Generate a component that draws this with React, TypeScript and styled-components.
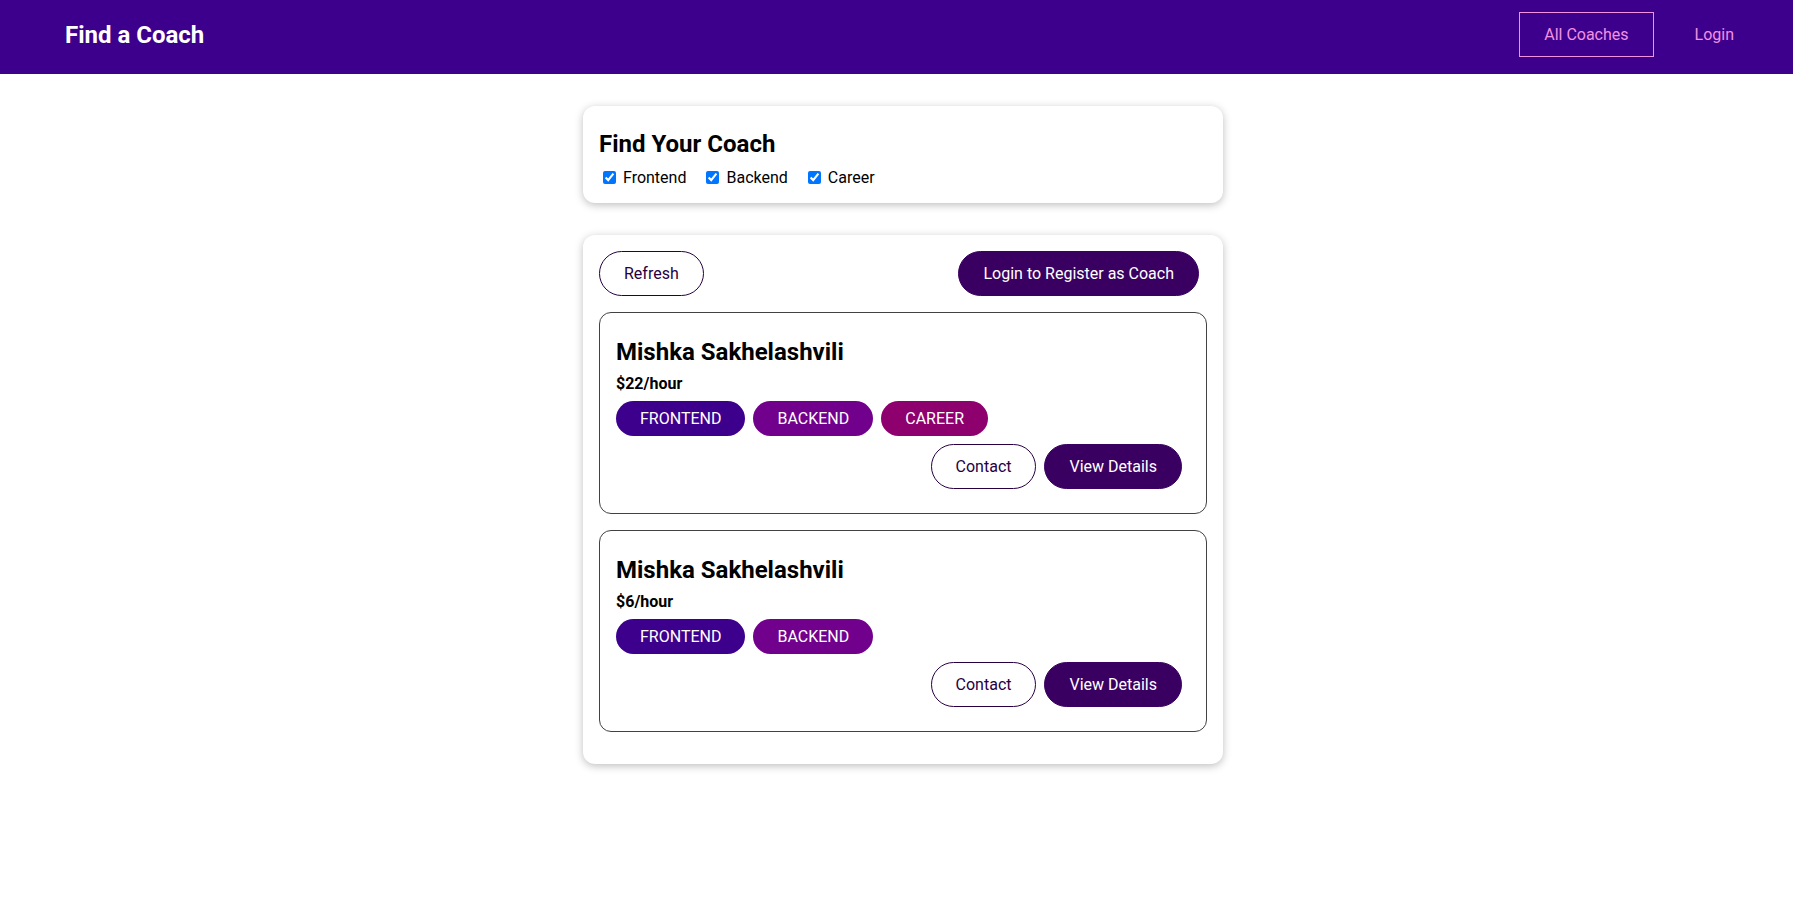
import React from "react";
import styled, { createGlobalStyle } from "styled-components";

const GlobalStyle = createGlobalStyle`
  * { box-sizing: border-box; }
  html { font-family: "Roboto", "Liberation Sans", sans-serif; }
  body { margin: 0; background: #ffffff; color: #000; overflow-x: hidden; }
`;

const Header = styled.header`
  height: 74px;
  background-color: #3d008d;
  display: flex;
  align-items: center;
  padding: 0 26px 5px 40px;
`;

const Nav = styled.nav`
  width: 100%;
  display: flex;
  justify-content: space-between;
  align-items: center;
`;

const Brand = styled.h1`
  margin: 0;
  font-size: 24px;
  font-weight: 700;
`;

const HeaderLink = styled.a<{ $active?: boolean; $brand?: boolean }>`
  text-decoration: none;
  display: inline-block;
  padding: 0.75rem 1.5rem;
  border: 1px solid ${(p) => (p.$active ? "#f391e3" : "transparent")};
  color: ${(p) => (p.$brand ? "#ffffff" : "#f391e3")};
  font-size: ${(p) => (p.$brand ? "24px" : "16px")};
  cursor: pointer;
`;

const NavList = styled.ul`
  list-style: none;
  margin: 0;
  padding: 0;
  display: flex;
  align-items: center;
`;

const NavItem = styled.li`
  margin: 0 0.5rem;
`;

const Main = styled.main`
  padding-left: 13px;
`;

const Card = styled.section`
  border-radius: 12px;
  box-shadow: 0 2px 8px rgba(0, 0, 0, 0.26);
  padding: 1rem;
  margin: 2rem auto;
  max-width: 40rem;
  background: #fff;
`;

const FilterTitle = styled.h2`
  margin: 8px 0 9px;
  font-size: 24px;
  font-weight: 700;
`;

const FilterRow = styled.div`
  font-size: 16px;
`;

const FilterOption = styled.span`
  margin-right: 1rem;

  input,
  label {
    vertical-align: middle;
  }

  label {
    margin-left: 0.25rem;
  }
`;

const Controls = styled.div`
  display: flex;
  justify-content: space-between;
`;

const Button = styled.button<{ $outline?: boolean }>`
  text-decoration: none;
  padding: 0.75rem 1.5rem;
  font: inherit;
  font-size: 16px;
  background-color: ${(p) => (p.$outline ? "transparent" : "#3a0061")};
  border: 1px solid ${(p) => (p.$outline ? "#270041" : "#3a0061")};
  color: ${(p) => (p.$outline ? "#270041" : "#ffffff")};
  cursor: pointer;
  border-radius: 30px;
  margin-right: 0.5rem;
  display: inline-block;
`;

const CoachList = styled.ul`
  list-style: none;
  margin: 0;
  padding: 0;
`;

const CoachItem = styled.li`
  margin: 1rem 0;
  border: 1px solid #424242;
  border-radius: 12px;
  padding: 1rem;
`;

const CoachName = styled.h3`
  font-size: 1.5rem;
  margin: 0.5rem 0;
  padding-top: 1px;
`;

const CoachRate = styled.h4`
  font-size: 16px;
  margin: 0.5rem 0;
`;

const Badges = styled.div`
  margin: 0.5rem 0;
`;

const badgeColors: Record<string, string> = {
  frontend: "#3d008d",
  backend: "#71008d",
  career: "#8d006e",
};

const Badge = styled.span<{ $area: string }>`
  background-color: ${(p) => badgeColors[p.$area] || "#000"};
  color: white;
  padding: 0.5rem 1.5rem;
  border-radius: 30px;
  display: inline-block;
  margin-right: 0.5rem;
  font-size: 16px;
`;

const Actions = styled.div`
  display: flex;
  justify-content: flex-end;
  margin: 0.5rem 0;
`;

const coaches = [
  { id: "c1", name: "Mishka Sakhelashvili", rate: 22, areas: ["frontend", "backend", "career"] },
  { id: "c2", name: "Mishka Sakhelashvili", rate: 6, areas: ["frontend", "backend"] },
];

const filters = [
  { id: "frontend", label: "Frontend" },
  { id: "backend", label: "Backend" },
  { id: "career", label: "Career" },
];

export default function App() {
  return (
    <>
      <GlobalStyle />
      <Header>
        <Nav>
          <Brand>
            <HeaderLink $brand>Find a Coach</HeaderLink>
          </Brand>
          <NavList>
            <NavItem>
              <HeaderLink $active>All Coaches</HeaderLink>
            </NavItem>
            <NavItem>
              <HeaderLink>Login</HeaderLink>
            </NavItem>
          </NavList>
        </Nav>
      </Header>
      <Main>
        <Card>
          <FilterTitle>Find Your Coach</FilterTitle>
          <FilterRow>
            {filters.map((f) => (
              <FilterOption key={f.id}>
                <input type="checkbox" id={f.id} defaultChecked />
                <label htmlFor={f.id}>{f.label}</label>
              </FilterOption>
            ))}
          </FilterRow>
        </Card>
        <Card>
          <Controls>
            <Button $outline>Refresh</Button>
            <Button>Login to Register as Coach</Button>
          </Controls>
          <CoachList>
            {coaches.map((c) => (
              <CoachItem key={c.id}>
                <CoachName>{c.name}</CoachName>
                <CoachRate>${c.rate}/hour</CoachRate>
                <Badges>
                  {c.areas.map((a) => (
                    <Badge key={a} $area={a}>
                      {a.toUpperCase()}
                    </Badge>
                  ))}
                </Badges>
                <Actions>
                  <Button $outline>Contact</Button>
                  <Button>View Details</Button>
                </Actions>
              </CoachItem>
            ))}
          </CoachList>
        </Card>
      </Main>
    </>
  );
}
